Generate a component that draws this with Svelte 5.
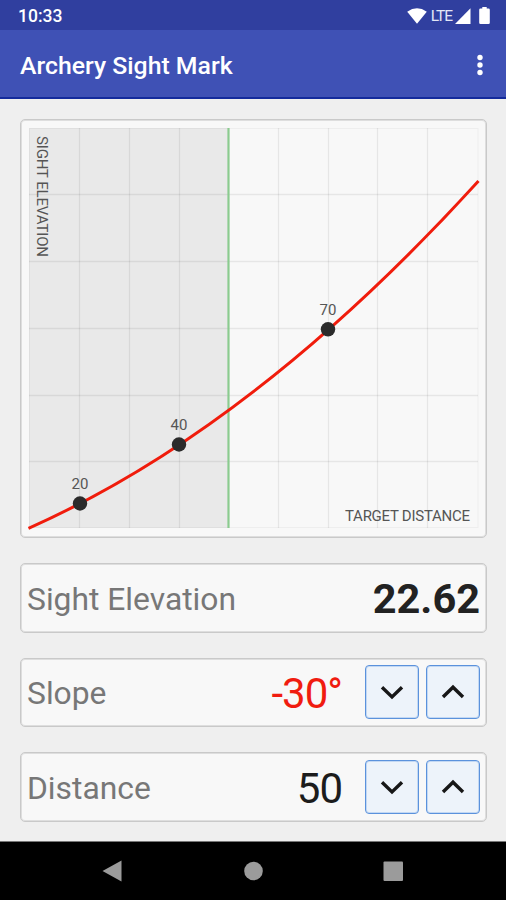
<script>
  const chart = { left: 9, right: 458, top: 9, bottom: 409 };
  const columns = [59.5, 109.5, 159.5, 258.5, 308.5, 357.5, 407.5];
  const rows = [75.5, 142.5, 209.5, 276.5, 342.5];
  const marks = [
    { distance: 20, x: 60, y: 384.5 },
    { distance: 40, x: 159, y: 325.5 },
    { distance: 70, x: 308, y: 210.3 },
  ];

  let slope = $state(-30);
  let distance = $state(50);
  const elevation = 22.62;
</script>

{#snippet stepper(label, onStep)}
  <div class="stepper">
    <button type="button" aria-label="Decrease {label}" onclick={() => onStep(-1)}>
      <svg width="24" height="24" viewBox="0 0 24 24"><path d="M2 7.3 12 17 22 7.3" /></svg>
    </button>
    <button type="button" aria-label="Increase {label}" onclick={() => onStep(1)}>
      <svg width="24" height="24" viewBox="0 0 24 24"><path d="M2 17 12 7.2 22 17" /></svg>
    </button>
  </div>
{/snippet}

<div class="screen">
  <div class="status">
    <span class="time">10:33</span>
    <svg class="wifi" width="20" height="16" viewBox="0 0 20 16">
      <path d="M.2 3.7Q10-3.2 19.8 3.7L10 15.8Z" />
    </svg>
    <span class="network">LTE</span>
    <svg class="signal" width="16" height="16" viewBox="0 0 16 16"><path d="M0 16 15.5.3V16Z" /></svg>
    <svg class="battery" width="11" height="18" viewBox="0 0 11 18">
      <path d="M3.3 0h4.4v1.5h1.8q1.3 0 1.3 1.3v13q0 1.300-1.300 1.300h-8Q.2 17.100.2 15.800v-13q0-1.300 1.300-1.300h1.800Z" />
    </svg>
  </div>

  <header>
    <h1>Archery Sight Mark</h1>
    <button type="button" class="menu" aria-label="More options">
      <svg width="8" height="22" viewBox="0 0 8 22">
        <circle cx="4" cy="3.5" r="2.7" />
        <circle cx="4" cy="11" r="2.7" />
        <circle cx="4" cy="18.5" r="2.7" />
      </svg>
    </button>
  </header>

  <main>
    <section class="card plot">
      <svg width="467" height="419" viewBox="0 0 467 419">
        <rect class="shade" x={chart.left} y={chart.top} width="199.5" height="400" />
        <rect class="frame" x="9.5" y="9.5" width="448.5" height="399" />
        {#each columns as x}
          <line class="grid" x1={x} x2={x} y1={chart.top} y2={chart.bottom} />
        {/each}
        {#each rows as y}
          <line class="grid" x1={chart.left} x2={chart.right} y1={y} y2={y} />
        {/each}
        <line class="current" x1="208.5" x2="208.5" y1={chart.top} y2={chart.bottom} />
        <path class="curve" d="M8.5 409.3Q233.25 309.7 458.5 62" />
        {#each marks as mark}
          <circle class="mark" cx={mark.x} cy={mark.y} r="7.2" />
          <text class="value" x={mark.x} y={mark.y - 14.7}>{mark.distance}</text>
        {/each}
        <text class="axis" x="325" y="401.5" textLength="125">TARGET DISTANCE</text>
        <text class="axis" transform="translate(17 17) rotate(90)" textLength="121">SIGHT ELEVATION</text>
      </svg>
    </section>

    <section class="card row">
      <span class="label">Sight Elevation</span>
      <strong class="result">{elevation}</strong>
    </section>

    <section class="card row">
      <span class="label">Slope</span>
      <span class="number" class:negative={slope < 0}>{slope}°</span>
      {@render stepper("slope", (step) => (slope += step))}
    </section>

    <section class="card row">
      <span class="label">Distance</span>
      <span class="number">{distance}</span>
      {@render stepper("distance", (step) => (distance += step))}
    </section>
  </main>

  <nav>
    <svg width="506" height="58" viewBox="0 0 506 58">
      <path d="M102.5 29 121.5 18.5v21Z" />
      <circle cx="253.5" cy="29" r="9.3" />
      <rect x="383.5" y="19.5" width="19.5" height="19.5" rx="1" />
    </svg>
  </nav>
</div>

<style>
  :global(body) {
    margin: 0;
    background: #efefef;
  }

  .screen {
    display: flex;
    flex-direction: column;
    width: 506px;
    height: 900px;
    overflow: hidden;
    background: #efefef;
    font-family: Roboto, "Liberation Sans", sans-serif;
  }

  svg {
    display: block;
    flex: none;
  }

  .status {
    display: flex;
    align-items: center;
    flex: none;
    box-sizing: border-box;
    height: 30px;
    padding: 1px 16px 0 18px;
    background: #303f9f;
    color: #fff;
    fill: #fff;
  }

  .time {
    margin-right: auto;
    font-size: 17.5px;
    font-weight: 500;
  }

  .network {
    margin-left: 4px;
    font-size: 15.5px;
    letter-spacing: -1px;
    color: #e3e6f6;
  }

  .signal {
    margin-left: 3px;
  }

  .battery {
    margin-left: 8px;
  }

  header {
    display: flex;
    align-items: center;
    justify-content: space-between;
    flex: none;
    box-sizing: border-box;
    height: 69px;
    padding: 2px 22px 0 20px;
    border-bottom: 2px solid #142b9c;
    background: #3f51b5;
    color: #fff;
  }

  h1 {
    margin: 0;
    padding-top: 2px;
    font-size: 24.8px;
    font-weight: 500;
    white-space: nowrap;
  }

  .menu {
    padding: 0;
    border: 0;
    background: none;
    fill: #fff;
  }

  main {
    display: flex;
    flex-direction: column;
    flex: 1;
    gap: 25px;
    padding: 20px 19px 0 20px;
  }

  .card {
    box-sizing: border-box;
    flex: none;
    border: 1px solid #c9c9c9;
    border-radius: 5px;
    background: #f8f8f8;
    box-shadow: inset 0 0 0 1px #dedede;
  }

  .plot {
    height: 419px;
  }

  .plot svg {
    margin: -1px;
  }

  .shade {
    fill: #e9e9e9;
  }

  .frame {
    fill: none;
    stroke: #000;
    stroke-opacity: 0.04;
  }

  .grid {
    stroke: #000;
    stroke-opacity: 0.07;
    stroke-width: 1.3;
  }

  .current {
    stroke: #8bcb8f;
    stroke-width: 2.2;
  }

  .curve {
    fill: none;
    stroke: #f01c0c;
    stroke-width: 3;
  }

  .mark {
    fill: #2b2b2b;
  }

  .value {
    fill: #555;
    font-size: 15px;
    text-anchor: middle;
  }

  .axis {
    fill: #555;
    font-size: 15px;
    font-weight: 400;
  }

  .row {
    display: flex;
    align-items: center;
    height: 69.5px;
    padding: 0 6px;
  }

  .label {
    margin-right: auto;
    padding-top: 2px;
    color: #777;
    font-size: 31.8px;
  }

  .result {
    padding-top: 2px;
    color: #222;
    font-size: 41.5px;
    font-weight: 700;
  }

  .number {
    padding-top: 3px;
    color: #1c1c1c;
    font-size: 42px;
    font-weight: 400;
    letter-spacing: -1px;
  }

  .negative {
    color: #f01c10;
  }

  .stepper {
    display: flex;
    gap: 7px;
    margin-left: 23px;
  }

  .stepper button {
    display: flex;
    align-items: center;
    justify-content: center;
    box-sizing: border-box;
    width: 54px;
    height: 54px;
    padding: 0;
    border: 1px solid #5b92dc;
    border-radius: 4px;
    background: #edf3fa;
    box-shadow: inset 0 0 0 1px #c3d8f3;
  }

  .stepper path {
    fill: none;
    stroke: #171717;
    stroke-width: 3.4;
  }

  nav {
    flex: none;
    height: 58px;
    border-top: 1px solid #777;
    background: #000;
    fill: #9b9b9b;
  }
</style>
